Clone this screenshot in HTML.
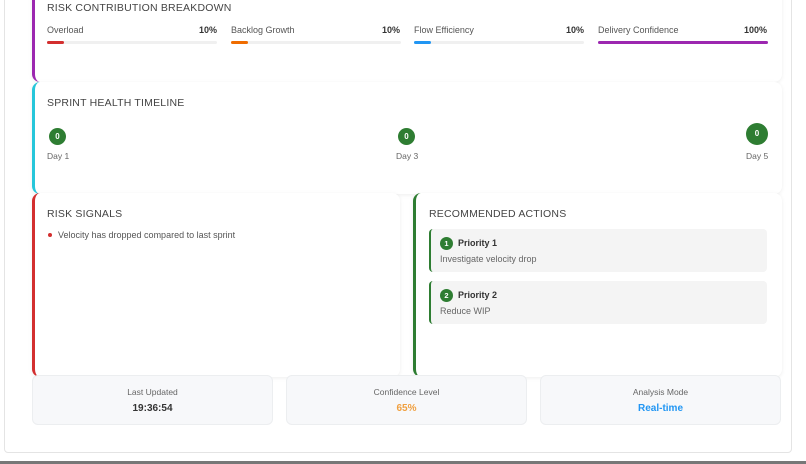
<!DOCTYPE html>
<html><head><style>
*{box-sizing:border-box;margin:0;padding:0}
body{width:806px;height:464px;background:#fff;font-family:"Liberation Sans",sans-serif;position:relative;overflow:hidden;color:#444}
.outer{position:absolute;left:4px;top:-10px;width:788px;height:463px;border:1px solid #e4e4e4;border-radius:4px;background:#fff}
.bottom{position:absolute;left:0;top:461px;width:806px;height:3px;background:#777}
.card{position:absolute;background:#fff;border-radius:8px;box-shadow:0 1px 4px rgba(0,0,0,.07)}
.h{position:absolute;font-size:10.5px;color:#444;letter-spacing:.2px}
.lbl{position:absolute;font-size:9px;color:#555}
.pct{position:absolute;font-size:9px;color:#333;font-weight:bold;text-align:right}
.track{position:absolute;height:3px;background:#f0f0f0;border-radius:2px}
.track i{display:block;height:3px;border-radius:2px}
.dot{position:absolute;border-radius:50%;background:#2e7d32;color:#fff;font-size:8px;font-weight:bold;text-align:center}
.day{position:absolute;font-size:8.5px;color:#666}
.act{position:absolute;left:429px;width:338px;height:43px;background:#f4f4f4;border-left:2px solid #2e7d32;border-radius:4px}
.num{position:absolute;left:9px;top:8px;width:13px;height:13px;border-radius:50%;background:#2e7d32;color:#fff;font-size:7.5px;font-weight:bold;text-align:center;line-height:13px}
.stat{position:absolute;top:375px;height:50px;background:#f7f8fa;border-radius:6px;border:1px solid #eceef0;text-align:center}
.stat .t{font-size:8.5px;color:#666;margin-top:11px}
.stat .v{font-size:10px;font-weight:bold;margin-top:6px}
</style></head><body>
<div class="outer"></div>
<div class="bottom"></div>

<div class="card" style="left:32px;top:-10px;width:750px;height:92px;border-left:3px solid #9c27b0"></div>
<div class="h" style="left:47px;top:2px">RISK CONTRIBUTION BREAKDOWN</div>
<div class="lbl" style="left:47px;top:25px">Overload</div><div class="pct" style="left:180px;width:37px;top:25px">10%</div>
<div class="track" style="left:47px;top:41px;width:170px"><i style="width:17px;background:#d32f2f"></i></div>
<div class="lbl" style="left:231px;top:25px">Backlog Growth</div><div class="pct" style="left:363px;width:37px;top:25px">10%</div>
<div class="track" style="left:231px;top:41px;width:170px"><i style="width:17px;background:#ef6c00"></i></div>
<div class="lbl" style="left:414px;top:25px">Flow Efficiency</div><div class="pct" style="left:547px;width:37px;top:25px">10%</div>
<div class="track" style="left:414px;top:41px;width:170px"><i style="width:17px;background:#2196f3"></i></div>
<div class="lbl" style="left:598px;top:25px">Delivery Confidence</div><div class="pct" style="left:730px;width:37px;top:25px">100%</div>
<div class="track" style="left:598px;top:41px;width:170px"><i style="width:170px;background:#9c27b0"></i></div>

<div class="card" style="left:32px;top:82px;width:750px;height:112px;border-left:3px solid #26c6da"></div>
<div class="h" style="left:47px;top:97px">SPRINT HEALTH TIMELINE</div>
<div class="dot" style="left:49px;top:128px;width:17px;height:17px;line-height:17px">0</div>
<div class="day" style="left:47px;top:151px">Day 1</div>
<div class="dot" style="left:398px;top:128px;width:17px;height:17px;line-height:17px">0</div>
<div class="day" style="left:396px;top:151px">Day 3</div>
<div class="dot" style="left:746px;top:123px;width:22px;height:22px;line-height:22px">0</div>
<div class="day" style="left:746px;top:151px">Day 5</div>

<div class="card" style="left:32px;top:193px;width:368px;height:184px;border-left:3px solid #d32f2f"></div>
<div class="h" style="left:47px;top:208px">RISK SIGNALS</div>
<div style="position:absolute;left:48px;top:233px;width:4px;height:4px;border-radius:50%;background:#d32f2f"></div>
<div class="lbl" style="left:58px;top:230px;color:#555">Velocity has dropped compared to last sprint</div>

<div class="card" style="left:413px;top:193px;width:369px;height:184px;border-left:3px solid #2e7d32"></div>
<div class="h" style="left:429px;top:208px">RECOMMENDED ACTIONS</div>
<div class="act" style="top:229px"><div class="num">1</div><div style="position:absolute;left:27px;top:9px;font-size:9px;font-weight:bold;color:#333">Priority 1</div><div style="position:absolute;left:9px;top:25px;font-size:9px;color:#666">Investigate velocity drop</div></div>
<div class="act" style="top:281px"><div class="num">2</div><div style="position:absolute;left:27px;top:9px;font-size:9px;font-weight:bold;color:#333">Priority 2</div><div style="position:absolute;left:9px;top:25px;font-size:9px;color:#666">Reduce WIP</div></div>

<div class="stat" style="left:32px;width:241px"><div class="t">Last Updated</div><div class="v" style="color:#333">19:36:54</div></div>
<div class="stat" style="left:286px;width:241px"><div class="t">Confidence Level</div><div class="v" style="color:#f0a040">65%</div></div>
<div class="stat" style="left:540px;width:241px"><div class="t">Analysis Mode</div><div class="v" style="color:#2196f3">Real-time</div></div>
</body></html>
